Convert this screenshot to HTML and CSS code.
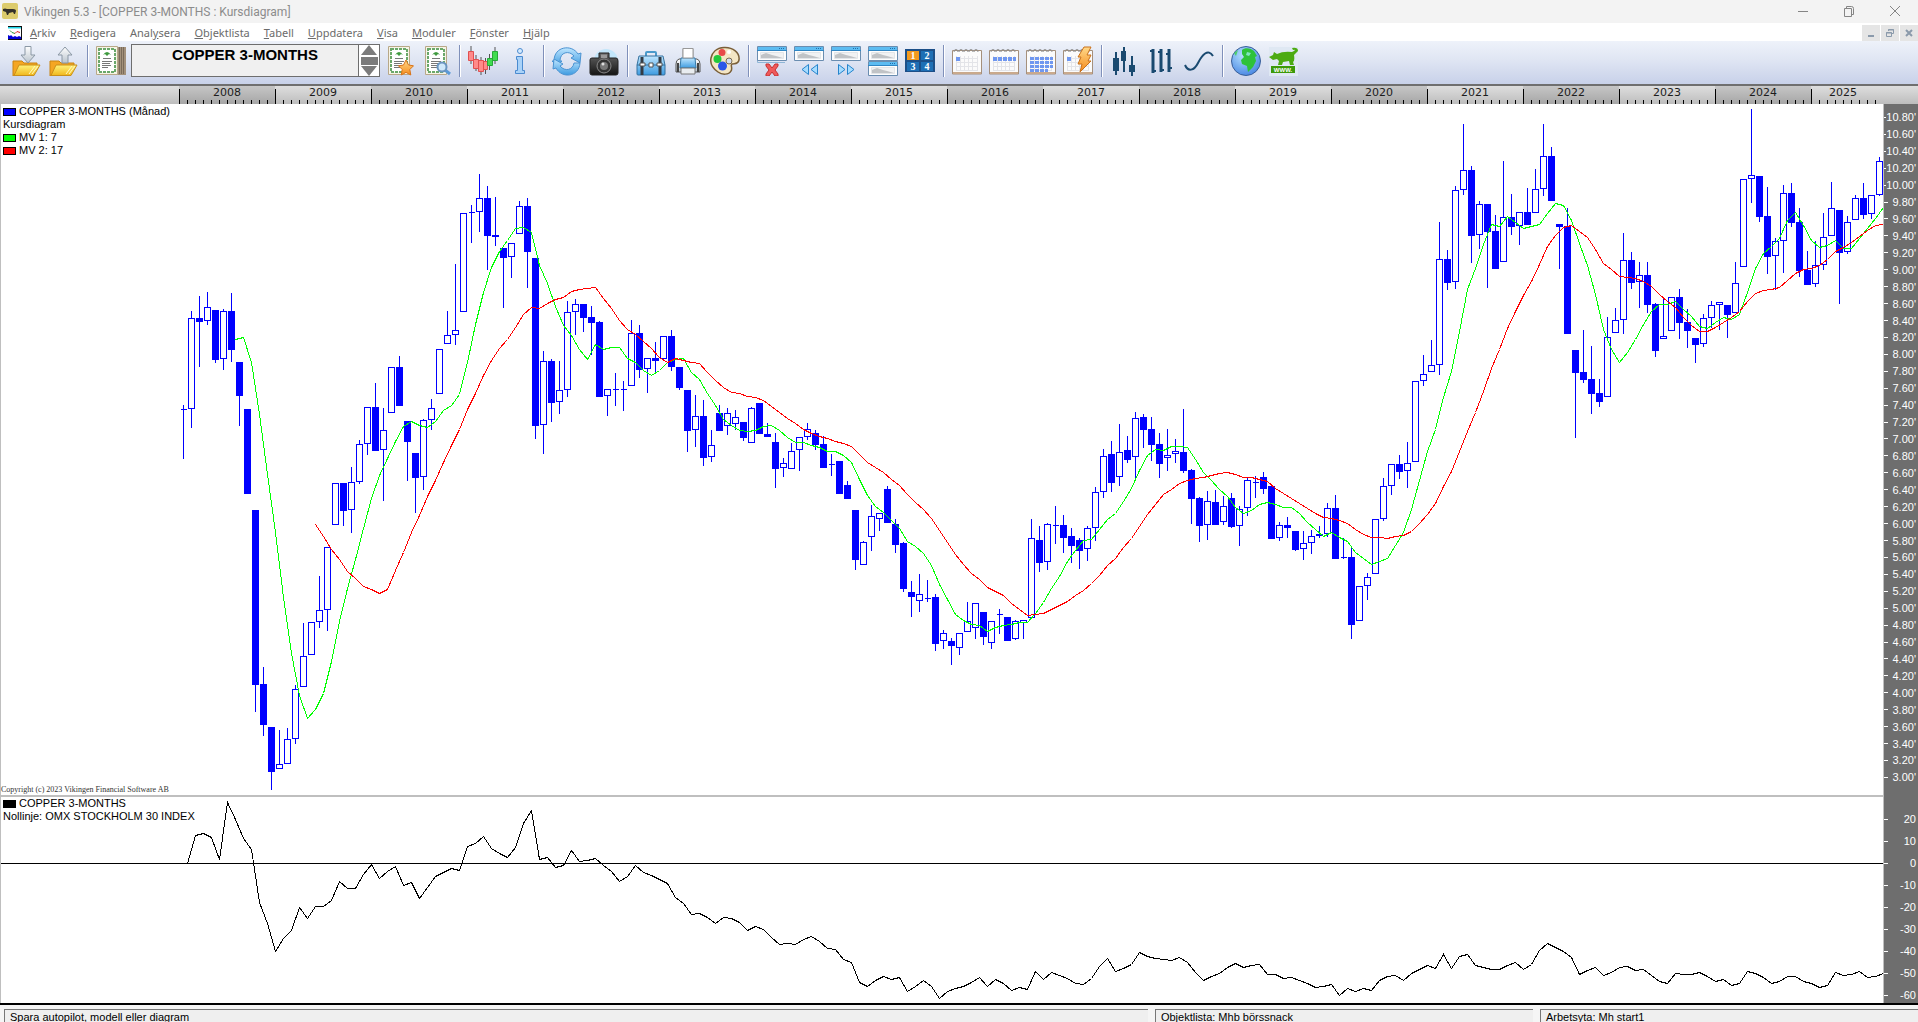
FILE: index.html
```html
<!DOCTYPE html>
<html lang="sv">
<head>
    <meta charset="UTF-8">
    <meta name="viewport" content="width=device-width, initial-scale=1.0">
    <title>Vikingen 5.3 - [COPPER 3-MONTHS : Kursdiagram]</title>
    <link rel="stylesheet" href="styles.css">
</head>
<body>
    <!-- shared gradients and shapes for the toolbar icons -->
    <svg class="defs" width="0" height="0" aria-hidden="true">
        <defs>
            <linearGradient id="gold" x1="0" y1="0" x2="0" y2="1"><stop offset="0" stop-color="#fff27a"/><stop offset="1" stop-color="#f0b71c"/></linearGradient>
            <linearGradient id="sky" x1="0" y1="0" x2="0" y2="1"><stop offset="0" stop-color="#bfe6ff"/><stop offset="1" stop-color="#3d9be0"/></linearGradient>
            <linearGradient id="steel" x1="0" y1="0" x2="0" y2="1"><stop offset="0" stop-color="#ffffff"/><stop offset="1" stop-color="#b9c3cc"/></linearGradient>
            <linearGradient id="dark" x1="0" y1="0" x2="0" y2="1"><stop offset="0" stop-color="#666"/><stop offset="1" stop-color="#141414"/></linearGradient>
            <linearGradient id="orange" x1="0" y1="0" x2="0" y2="1"><stop offset="0" stop-color="#ffd98a"/><stop offset="1" stop-color="#f58a1a"/></linearGradient>
            <radialGradient id="sea" cx="0.4" cy="0.3" r="0.8"><stop offset="0" stop-color="#b5e0ff"/><stop offset="1" stop-color="#3f7fe0"/></radialGradient>
            <g id="folder">
                <path d="M1 15h9l2 2h13v4H8l-5 9H1z" fill="#f5a623" stroke="#c98412"/>
                <path d="M7 19h21l-6 10.500H2z" fill="url(#gold)" stroke="#c98f1a"/>
                <path d="M17 28l6-8M20 28l6-8" stroke="#fff8c0" fill="none"/>
            </g>
            <g id="cert">
                <path d="M4.500.500h21v28h-21z" fill="#f6f4e6" stroke="#b8a888"/>
                <path d="M7 3h16v23H7z" fill="#fff" stroke="#6aa86a" stroke-width="2" stroke-dasharray="3 1"/>
                <path d="M11 9q4-6 8 0l-2-1-2 2-2-2z" fill="#3f9a3f"/>
                <path d="M11 12.500h8M10 15.500h10M10 17.500h8M10 19.500h9M10 21.500h6" stroke="#777" fill="none"/>
            </g>
            <g id="win">
                <path d="M.500.500h29v14h-29z" fill="#fdfdfd" stroke="#6a8db0"/>
                <path d="M1 1h28v3H1z" fill="#5cbcf2"/>
                <path d="M0 4.500h30" stroke="#2f86c4"/>
                <path d="M22 2.500h1M24 2.500h1M26 2.500h1" stroke="#1f6fae"/>
                <path d="M3.500 6.500h23v6h-23z" fill="#f1f2f3" stroke="#e2e5e8"/>
                <path d="M4 12V9l5-2 6 2 4 1 7 2z" fill="#c0c3c6"/>
            </g>
            <g id="cal">
                <path d="M.500 4.500h29v23.500h-29z" fill="#fbfbfb" stroke="#a5907c"/>
                <path d="M1 27h28" stroke="#c9a98c" stroke-width="2"/>
                <path d="M4 12.500h22M4 16.500h22M4 20.500h22M4 24.500h22M4.500 10v14M8.500 10v14M12.500 10v14M16.500 10v14M20.500 10v14M25.500 10v14" stroke="#e3e4e8" fill="none"/>
                <path d="M2 6a2 2.500 0 1 1 4 0M7 6a2 2.500 0 1 1 4 0M12 6a2 2.500 0 1 1 4 0M17 6a2 2.500 0 1 1 4 0M22 6a2 2.500 0 1 1 4 0" fill="none" stroke="#8f8f8f"/>
            </g>
        </defs>
    </svg>

    <header class="titlebar">
        <svg class="app-icon" viewBox="0 0 16 16" aria-hidden="true">
            <rect width="16" height="16" rx="2" fill="#dccb6c"/>
            <path d="M1 6q2-1 4 0h6q3 0 3 2l-1 3h-1l-1-2-4 1-1 2H5l-1-3-3-1z" fill="#33302a"/>
        </svg>
        <h1 class="title">Vikingen 5.3 - [COPPER 3-MONTHS : Kursdiagram]</h1>
        <div class="window-buttons">
            <button aria-label="Minimera"><svg viewBox="0 0 12 12"><path d="M1 6.500h10"/></svg></button>
            <button aria-label="Återställ"><svg viewBox="0 0 12 12"><path d="M1.500 3.500h7v8h-7zM3.500 3V1.500h5q2 0 2 2v6H9"/></svg></button>
            <button aria-label="Stäng"><svg viewBox="0 0 12 12"><path d="M1 1l10 10M11 1L1 11"/></svg></button>
        </div>
    </header>

    <nav class="menubar">
        <svg class="doc-icon" viewBox="0 0 14 14" aria-hidden="true">
            <path d="M0 0h14v14H0z" fill="#111"/>
            <path d="M0 1h13v12H0z" fill="#fff"/>
            <path d="M0 1h13v1.500H0z" fill="#1fd6e8"/>
            <path d="M0 13V9l2 1 1-1 2 2 2-1 2 1 2-1 2 1v2z" fill="#0000d8"/>
            <path d="M2 4.500l2 2 3 1" stroke="#2a9a3a" fill="none"/>
            <path d="M7 7.500l2-2 3 1" stroke="#d82020" fill="none"/>
        </svg>
        <a href="#"><u>A</u>rkiv</a>
        <a href="#"><u>R</u>edigera</a>
        <a href="#">Anal<u>y</u>sera</a>
        <a href="#"><u>O</u>bjektlista</a>
        <a href="#"><u>T</u>abell</a>
        <a href="#"><u>U</u>ppdatera</a>
        <a href="#"><u>V</u>isa</a>
        <a href="#"><u>M</u>oduler</a>
        <a href="#"><u>F</u>önster</a>
        <a href="#"><u>H</u>jälp</a>
        <div class="mdi-buttons">
            <button aria-label="Minimera diagram"><svg viewBox="0 0 10 10"><path d="M2 8h6" stroke-width="2"/></svg></button>
            <button aria-label="Återställ diagram"><svg viewBox="0 0 10 10"><path d="M1.500 4.500h5v4h-5zM1 5h6M3.500 3V1.500h5v4H7M3 2h6"/></svg></button>
            <button aria-label="Stäng diagram"><svg viewBox="0 0 10 10"><path d="M2 2l6 6M8 2L2 8" stroke-width="2"/></svg></button>
        </div>
    </nav>

    <div class="toolbar" role="toolbar">
        <button class="tool" aria-label="Öppna"><svg viewBox="0 0 30 30"><use href="#folder"/><path d="M13 .500h6V9h4l-7 8-7-8h4z" fill="url(#steel)" stroke="#8b98a5"/></svg></button>
        <button class="tool" aria-label="Spara"><svg viewBox="0 0 30 30"><use href="#folder"/><path d="M13 17V9H9l7-8 7 8h-4v8z" fill="url(#steel)" stroke="#8b98a5"/></svg></button>
        <span class="sep"></span>
        <button class="tool" aria-label="Objektlista"><svg viewBox="0 0 30 30"><path d="M21 1h9v28H1v-2z" fill="#a3917b"/><path d="M23.500 1v27M25.500 1v27M27.500 1v27" stroke="#7a6b5a"/><use href="#cert" x="-4"/></svg></button>

        <div class="object-field">
            <input type="text" value="COPPER 3-MONTHS" aria-label="Objekt">
            <div class="spinner">
                <button aria-label="Föregående"><svg viewBox="0 0 20 10"><path d="M10 0l8 10H2z"/></svg></button>
                <button aria-label="Lista"><svg viewBox="0 0 20 10"><path d="M2 1h17v8H2z"/></svg></button>
                <button aria-label="Nästa"><svg viewBox="0 0 20 10"><path d="M2 0h16l-8 10z"/></svg></button>
            </div>
        </div>

        <button class="tool" aria-label="Favoriter"><svg viewBox="0 0 30 30"><use href="#cert"/><path d="M22 14l2.500 5 5 .800-3.700 3.700 1 5.500-4.800-2.600-4.800 2.600 1-5.500-3.700-3.700 5-.800z" fill="url(#orange)" stroke="#d9741a"/></svg></button>
        <button class="tool" aria-label="Sök objekt"><svg viewBox="0 0 30 30"><use href="#cert"/><path d="M24 24l5 4" stroke="#5c9ad6" stroke-width="3"/><circle cx="21" cy="21" r="4.500" fill="#cfe8fb" stroke="#6a95c0" stroke-width="2"/></svg></button>
        <span class="sep"></span>
        <button class="tool" aria-label="Kursdiagram"><svg viewBox="0 0 30 30">
            <path d="M3 0v18M8 9v16M13 11v18M17.500 12v16M21.500 8v16M27 1v17" stroke="#555"/>
            <path d="M.500 5.500h5v9h-5zM5.500 13.500h5v9h-5zM10.500 14.500h5v11h-5zM15.500 15.500h4v8h-4z" fill="#ff8a8a" stroke="#e05050"/>
            <path d="M19.500 12.500h5v7h-5zM24.500 5.500h5v9h-5z" fill="#3fdc4f" stroke="#27a838"/></svg></button>
        <button class="tool" aria-label="Information"><svg viewBox="0 0 30 30"><circle cx="15" cy="5" r="2.500" fill="#d5ebff" stroke="#4b8bd0"/><path d="M11.500 10.500h6v14h2v3h-9v-3h2v-11h-1z" fill="#a9d2f8" stroke="#4b8bd0"/></svg></button>
        <span class="sep"></span>
        <button class="tool" aria-label="Uppdatera kurser"><svg viewBox="0 0 30 30"><g fill="url(#sky)" stroke="#4b93d2"><path d="M2 15C2 0 20-2 26 8l3-1-1 10-9-5 3-2c-5-6-14-4-14 5l2 0-5 5-5-5z"/><path d="M28 17C27 31 10 33 4 22l-3 1 1-10 9 5-3 2c5 6 13 4 14-3z"/></g></svg></button>
        <button class="tool" aria-label="Ögonblicksbild"><svg viewBox="0 0 30 30"><circle cx="17" cy="15" r="12" fill="#c3e6fa"/><path d="M10 12V7h10v5h7q2 0 2 3v12q0 2-2 2H3q-2 0-2-2V14q0-2 2-2z" fill="url(#dark)" stroke="#222"/><path d="M12 8.500h6V12h-6z" fill="#999"/><circle cx="15" cy="20" r="7" fill="#333" stroke="#888"/><circle cx="15" cy="20" r="4" fill="#777"/><circle cx="14" cy="18" r="1.500" fill="#ddd"/></svg></button>
        <span class="sep"></span>
        <button class="tool" aria-label="Portfölj"><svg viewBox="0 0 30 30"><path d="M10 11V7q0-1 1-1h8q1 0 1 1v4" fill="none" stroke="#4a9acb" stroke-width="2"/><path d="M3 10h24l2 9v9q0 1-1 1H2q-1 0-1-1v-9z" fill="url(#sky)" stroke="#34719e"/><path d="M1 19h28" stroke="#2e6f9f"/><path d="M6 11v18M24 11v18" stroke="#333b44" stroke-width="3"/><path d="M4 17h5v3H4zM21 17h5v3h-5zM13 17h4v4h-4z" fill="#fff" stroke="#555"/></svg></button>
        <button class="tool" aria-label="Skriv ut"><svg viewBox="0 0 30 30"><path d="M10 2.500h10V16H10z" fill="#fff" stroke="#999"/><path d="M6 13h18q3 1 3 5v8H3v-8q0-4 3-5z" fill="url(#steel)" stroke="#555"/><path d="M8 12h14l1 10H7z" fill="url(#sky)" stroke="#3478a8"/><path d="M10 2.500h10V12H10z" fill="#fff" stroke="#999"/><path d="M8 22h14v6H8z" fill="#e9edf0" stroke="#777"/><path d="M5 17v9M25 17v9" stroke="#444" stroke-width="2"/></svg></button>
        <button class="tool" aria-label="Färger"><svg viewBox="0 0 30 30"><path d="M14 1.500C23 1 30 7 29 14c-1 5-5 3-7 4s1 4-1 7c-2 4-9 4-13 1C2 22 0 17 1 12S6 2 14 1.500z" fill="#f4e6c4" stroke="#7a5f38" stroke-width="1.500"/><circle cx="12" cy="6.500" r="3.500" fill="#e84a4a"/><circle cx="7.500" cy="13" r="4" fill="#22c93a"/><circle cx="12.500" cy="20" r="4.500" fill="#2b56e8"/><circle cx="19" cy="15" r="3" fill="#d3def0" stroke="#7a6a50"/><circle cx="19" cy="6" r="2" fill="#fff"/></svg></button>
        <span class="sep"></span>
        <button class="tool" aria-label="Stäng fönster"><svg viewBox="0 0 30 30"><path d="M.500 3v13.500H28" fill="none" stroke="#8fb6d6"/><use href="#win"/><path d="M9 18h3l3 4 3-4h3v2l-3 4 3 4v2h-3l-3-4-3 4H9v-2l3-4-3-4z" fill="#ee5a5a" stroke="#c92f2f"/></svg></button>
        <button class="tool" aria-label="Föregående fönster"><svg viewBox="0 0 30 30"><use href="#win"/><path d="M14.500 18.500v10L8 23.500zM23.500 18.500v10L17 23.500z" fill="#a5dcff" stroke="#2584cc"/></svg></button>
        <button class="tool" aria-label="Nästa fönster"><svg viewBox="0 0 30 30"><use href="#win"/><path d="M7.500 18.500v10l6.500-5zM16.500 18.500v10l6.500-5z" fill="#a5dcff" stroke="#2584cc"/></svg></button>
        <button class="tool" aria-label="Dela fönster"><svg viewBox="0 0 30 30"><use href="#win"/><use href="#win" y="15"/></svg></button>
        <button class="tool" aria-label="Arbetsytor"><svg viewBox="0 0 30 30"><path d="M0 3h30v23H0z" fill="#1c4f88"/><path d="M2 5h12v9H2z" fill="#f39a1e"/><path d="M16 5h12v9H16zM2 16h12v9H2zM16 16h12v9H16z" fill="#1e6fb5"/><g class="num"><text x="8" y="13">1</text><text x="22" y="13">2</text><text x="8" y="24">3</text><text x="22" y="24">4</text></g></svg></button>
        <span class="sep"></span>
        <button class="tool" aria-label="Dag"><svg viewBox="0 0 30 30"><use href="#cal"/><path d="M4 11h4v4H4z" fill="#6f97f0"/></svg></button>
        <button class="tool" aria-label="Vecka"><svg viewBox="0 0 30 30"><use href="#cal"/><path d="M4 13h23" stroke="#6f97f0" stroke-width="4" stroke-dasharray="4 1"/></svg></button>
        <button class="tool" aria-label="Månad"><svg viewBox="0 0 30 30"><use href="#cal"/><path d="M4 12.500h23M4 16.500h23M4 20.500h23M4 24.500h18" stroke="#6f97f0" stroke-width="3" stroke-dasharray="4 1"/></svg></button>
        <button class="tool" aria-label="Intradag"><svg viewBox="0 0 30 30"><use href="#cal"/><path d="M4 11h4v4H4z" fill="#6f97f0"/><path d="M21 1h7l-4 8h4l-3 6h3L17 26l2-8h-4l3-7h-3z" fill="url(#orange)" stroke="#c9701a"/></svg></button>
        <span class="sep"></span>
        <button class="tool" aria-label="Candlestick"><svg viewBox="0 0 30 30"><path d="M6 6v23M14 1v25M22 10v20" stroke="#1a4a70" stroke-width="2"/><path d="M3 12h6v13H3zM11 5h5v10h-5zM19 19h6v7h-6z" fill="#1a4a70"/></svg></button>
        <button class="tool" aria-label="Staplar"><svg viewBox="0 0 30 30"><path d="M6 3v24M14 3v23M22 3v23" stroke="#1a4a70" stroke-width="3"/><path d="M3 5h3M6 25h3M11 6h3M14 24h3M19 8h3M22 22h3" stroke="#1a4a70" stroke-width="2"/></svg></button>
        <button class="tool" aria-label="Linje"><svg viewBox="0 0 30 30"><path d="M1 19c3 7 9 6 13-2S24 2 29 10" fill="none" stroke="#1a4a70" stroke-width="2"/></svg></button>
        <span class="sep"></span>
        <button class="tool" aria-label="Internet"><svg viewBox="0 0 30 30"><circle cx="15" cy="15" r="14.500" fill="url(#sea)" stroke="#3a5f98"/><path d="M11 4c3-3 9-2 12 1l3 5-2 1 1 4-3 6-5 5-1-6-5-2-1-4 3-3-2-3z" fill="#2ec23a"/><path d="M16 6l4 1-2 3-3-1z" fill="#7fe4c0"/><path d="M3 7l4-3-2 6z" fill="#4dcf6a"/></svg></button>
        <button class="tool" aria-label="Vikingen på webben"><svg viewBox="0 0 30 30"><path d="M1 1h29v29H1z" fill="#dfe8f3"/><path d="M1 11l4-2 1-3 3 2q6-3 15-2l2-1q2-2-1-1l-1-2q6-1 6 3l-4 4q1 6-1 7l1 3h-4l-1-4-6 1-1 3h-4l1-4-2-2-4 1z" fill="#4cab12"/><path d="M3 20h24v7H3z" fill="#3c9a08"/><text class="www" x="15" y="26">WWW.</text></svg></button>
    </div>

    <div class="ruler" id="ruler"></div>

    <main class="workspace">
        <section class="panel price">
            <div class="plot">
                <svg class="chart" id="priceChart" viewBox="0 104 1884 691" preserveAspectRatio="none" role="img" aria-label="COPPER 3-MONTHS"></svg>
                <ul class="legend">
                    <li><i class="swatch blue"></i>COPPER 3-MONTHS (Månad)</li>
                    <li>Kursdiagram</li>
                    <li><i class="swatch green"></i>MV 1: 7</li>
                    <li><i class="swatch red"></i>MV 2: 17</li>
                </ul>
                <small class="copyright">Copyright (c) 2023 Vikingen Financial Software AB</small>
            </div>
            <ul class="axis" id="priceAxis"></ul>
        </section>
        <section class="panel relative">
            <div class="plot">
                <svg class="chart" id="indexChart" viewBox="0 797 1884 206" preserveAspectRatio="none" role="img" aria-label="Relativ utveckling"></svg>
                <ul class="legend">
                    <li><i class="swatch black"></i>COPPER 3-MONTHS</li>
                    <li>Nollinje: OMX STOCKHOLM 30 INDEX</li>
                </ul>
            </div>
            <ul class="axis" id="indexAxis"></ul>
        </section>
    </main>

    <footer class="statusbar">
        <p class="status hint">Spara autopilot, modell eller diagram</p>
        <p class="status">Objektlista: Mhb börssnack</p>
        <p class="status">Arbetsyta: Mh start1</p>
    </footer>

    <script src="script.js"></script>
</body>
</html>
```

FILE: styles.css
```css
:root {
    --text: #000;
    --muted: #6b6b6b;
    --axis: #6e6e6e;
    --line: #bfbfbf;
    --candle: #0000ff;
    --font-ui: "Noto Sans", "Open Sans", sans-serif;
    --font-small: "Liberation Sans", Arial, sans-serif;
}

* {
    box-sizing: border-box;
}

body {
    margin: 0;
    height: 100vh;
    display: flex;
    flex-direction: column;
    overflow: hidden;
    background: #fff;
    color: var(--text);
    font-family: var(--font-small);
    font-size: 11px;
}

button {
    border: 0;
    padding: 0;
    background: none;
    display: flex;
    align-items: center;
    justify-content: center;
}

ul {
    list-style: none;
    margin: 0;
    padding: 0;
}

.defs {
    position: absolute;
}

/* title bar */
.titlebar {
    flex: none;
    height: 23px;
    display: flex;
    align-items: flex-start;
    background: #f3f3f3;
    padding-left: 2px;
}

.app-icon {
    width: 16px;
    height: 16px;
    margin-top: 3px;
}

.title {
    margin: 0 auto 0 6px;
    font: 12px/24px Roboto, sans-serif;
    color: #8c8c8c;
}

.window-buttons {
    display: flex;
}

.window-buttons button {
    width: 46px;
    height: 21px;
}

.window-buttons svg {
    width: 12px;
    height: 12px;
    fill: none;
    stroke: #858585;
}

/* menu */
.menubar {
    flex: none;
    height: 18px;
    display: flex;
    align-items: center;
    background: #fff;
    padding: 2px 0 0 8px;
}

.doc-icon {
    width: 14px;
    height: 14px;
    margin-right: 1px;
}

.menubar a {
    padding: 0 7px;
    font: 11px/18px var(--font-ui);
    color: var(--muted);
    text-decoration: none;
}

.mdi-buttons {
    display: flex;
    gap: 1px;
    margin-left: auto;
}

.mdi-buttons button {
    width: 18px;
    height: 17px;
    background: #e5e5e5;
}

.mdi-buttons svg {
    width: 10px;
    height: 10px;
    fill: none;
    stroke: #8b9aab;
}

/* toolbar */
.toolbar {
    flex: none;
    height: 45px;
    display: flex;
    align-items: center;
    padding: 0 8px 4px;
    background: linear-gradient(#eef2fa, #dfe5f3 45%, #c8d1e9);
    border-bottom: 2px solid #6f6f6f;
}

.tool {
    flex: none;
    width: 37px;
    height: 33px;
}

.tool svg {
    width: 30px;
    height: 30px;
}

.num text {
    font: bold 10px "Liberation Serif", serif;
    fill: #fff;
    text-anchor: middle;
}

.www {
    font: bold 6px var(--font-small);
    fill: #fff;
    text-anchor: middle;
}

.sep {
    flex: none;
    width: 2px;
    height: 32px;
    margin: 0 3px 0 5px;
    background: #7f90ba;
    border-right: 1px solid #fff;
}

.object-field {
    flex: none;
    width: 249px;
    height: 33px;
    margin: 0 0 0 2px;
    display: flex;
    border: 1px solid #6e6e6e;
    background: #f0f0f0;
}

.object-field input {
    flex: 1;
    min-width: 0;
    border: 0;
    padding: 0 0 12px;
    background: none;
    font: bold 15px var(--font-small);
    text-align: center;
}

.spinner {
    width: 21px;
    display: flex;
    flex-direction: column;
    justify-content: space-between;
    background: #fff;
    border-left: 1px solid #6e6e6e;
}

.spinner svg {
    width: 20px;
    height: 10px;
    fill: #7b7b7b;
}

/* year ruler */
.ruler {
    flex: none;
    height: 18px;
    display: flex;
    background: linear-gradient(#dedede, #bdbdbd);
}

.year {
    position: relative;
    display: flex;
    align-items: flex-end;
}

.year.even {
    background: linear-gradient(#c6c6c6, #a6a6a6);
}

.year b {
    position: absolute;
    left: 0;
    right: 0;
    top: 0;
    text-align: center;
    font: 11px/13px "DejaVu Sans", Verdana, sans-serif;
    color: #1c1c1c;
}

.month {
    flex: 1;
    height: 4px;
    border-left: 1px solid #000;
}

.month:first-of-type {
    height: 15px;
}

.year.tail .month {
    height: 4px;
}

/* chart panels */
.workspace {
    flex: 1;
    min-height: 0;
    display: flex;
    flex-direction: column;
    overflow: hidden;
    border-bottom: 2px solid #000;
}

.panel {
    display: flex;
    min-height: 0;
}

.price {
    flex: 693;
}

.relative {
    flex: 206;
    overflow: hidden;
}

.plot {
    flex: 1;
    min-width: 0;
    position: relative;
}

.price .plot {
    border-bottom: 2px solid var(--line);
}

/* frame lines lie over the charts so they do not move them */
.plot::after {
    content: "";
    position: absolute;
    inset: 0;
    border-left: 1px solid var(--line);
    border-right: 1px solid var(--line);
    pointer-events: none;
}

.chart {
    display: block;
    position: absolute;
    width: 100%;
    height: 100%;
    shape-rendering: crispEdges;
}

.chart path {
    fill: none;
    stroke-width: 1;
}

.chart .up {
    fill: #fff;
    stroke: var(--candle);
}

.chart .down {
    fill: var(--candle);
    stroke: var(--candle);
}

.chart .mv1 {
    stroke: #00ff00;
}

.chart .mv2 {
    stroke: #ff0000;
}

.chart .index,
.chart .zero {
    stroke: #000;
}

.legend {
    position: absolute;
    left: 3px;
    top: 1px;
    line-height: 13px;
}

.relative .legend {
    top: 0;
}

.legend li {
    display: flex;
    align-items: center;
    white-space: nowrap;
}

.swatch {
    width: 13px;
    height: 8px;
    margin-right: 3px;
    border: 1px solid #000;
}

.blue { background: #0000ff; }
.green { background: #00ff00; }
.red { background: #ff0000; }
.black { background: #000; }

.copyright {
    position: absolute;
    left: 1px;
    bottom: 1px;
    font: 8px/9px "Liberation Serif", serif;
    color: #333;
}

.axis {
    flex: none;
    width: 34px;
    display: flex;
    flex-direction: column;
    background: var(--axis);
    color: #fff;
}

.price .axis {
    padding: 5px 0 11px;
}

.relative .axis {
    padding-top: 11px;
    margin-bottom: -3px;
}

.axis li {
    flex: 1;
    min-height: 0;
    display: flex;
    align-items: center;
    justify-content: space-between;
    padding-right: 2px;
}

.axis li::before {
    content: "";
    width: 4px;
    height: 1px;
    background: #fff;
}

/* status bar */
.statusbar {
    flex: none;
    height: 17px;
    display: flex;
    gap: 7px;
    padding: 4px 0 0 4px;
    background: #f5f5f5;
    overflow: hidden;
}

.status {
    flex: 376;
    margin: 0;
    padding-left: 5px;
    font-size: 11px;
    line-height: 15px;
    white-space: nowrap;
    background: #efefef;
    border-top: 1px solid #777;
    border-left: 1px solid #777;
}

.status.hint {
    flex: 1150;
}
```

FILE: script.js
```js
const FIRST_X = 183.5;   // January 2008
const STEP = 8;          // one month
const LINE_SHIFT = 4;    // lines are drawn at the end of the month

// high, top of body, bottom of body, low, rising (1) or falling (0)
const candles = [
    [405,409,409,459,1],[311,318,408,428,1],[296,318,321,367,0],[292,307,320,325,1],[310,310,359,363,0],[309,311,358,370,1],
    [293,311,349,362,0],[362,362,395,426,0],[409,409,493,493,0],[510,510,684,712,0],[667,684,724,736,0],[727,727,771,790,0],
    [730,764,768,768,1],[728,739,763,763,1],[685,689,738,744,1],[623,656,686,686,1],[622,622,654,654,1],[576,610,621,628,1],
    [547,547,609,631,1],[483,483,524,524,1],[483,483,510,526,0],[467,482,509,533,1],[440,444,481,484,1],[407,407,443,455,1],
    [383,407,450,450,0],[408,430,449,501,1],[367,367,412,412,1],[356,367,405,405,0],[421,421,441,481,0],[453,453,477,513,0],
    [419,420,476,490,1],[399,408,419,430,1],[349,349,393,393,1],[311,335,343,343,1],[264,330,334,345,1],[213,213,311,311,1],
    [205,212,212,243,1],[174,198,211,232,1],[186,198,235,270,0],[197,235,236,246,0],[248,248,257,308,0],[243,243,256,278,1],
    [201,206,233,233,1],[198,206,251,288,0],[258,258,425,439,0],[351,361,424,454,1],[359,361,402,422,0],[361,390,401,414,1],
    [301,312,389,397,1],[299,304,311,335,1],[304,304,317,332,0],[306,317,322,355,0],[321,322,396,397,0],[389,389,395,416,1],
    [373,389,389,406,1],[381,389,389,411,1],[320,333,385,385,1],[325,333,369,378,0],[358,358,368,393,1],[342,358,360,372,0],
    [336,336,358,358,1],[330,336,366,371,0],[367,367,387,390,0],[390,390,430,452,0],[395,416,429,447,1],[400,416,457,466,0],
    [430,445,456,462,1],[405,413,430,431,0],[408,413,425,435,1],[410,417,423,430,1],[422,422,437,441,0],[407,408,442,442,1],
    [403,403,433,434,0],[423,434,436,437,0],[433,442,468,488,0],[458,463,467,477,1],[443,451,468,469,1],[437,437,449,471,1],
    [423,429,436,440,1],[430,433,444,450,0],[436,444,467,468,0],[454,464,464,476,1],[461,461,493,494,0],[481,485,498,499,0],
    [510,510,559,570,0],[541,542,564,564,1],[505,516,536,551,1],[513,513,518,531,1],[486,489,522,523,0],[519,524,544,553,0],
    [542,543,588,592,0],[581,592,596,617,0],[574,594,600,612,1],[580,598,598,602,1],[594,597,643,651,0],[630,633,640,649,1],
    [638,641,645,665,0],[633,633,647,655,1],[602,621,631,631,1],[603,603,627,639,1],[612,612,636,645,0],[621,621,642,649,1],
    [609,614,614,634,1],[617,617,640,641,0],[620,621,638,640,1],[620,620,622,639,1],[519,538,617,617,1],[526,540,562,572,0],
    [523,524,561,570,1],[506,525,525,544,1],[515,525,537,553,0],[528,536,545,563,0],[538,540,550,569,0],[526,528,548,561,1],
    [487,492,527,541,1],[449,456,491,498,1],[441,454,482,492,0],[424,452,476,486,1],[436,450,459,463,0],[412,418,456,479,1],
    [414,417,429,448,0],[417,429,444,461,0],[433,444,463,478,0],[429,455,457,471,1],[439,451,453,463,1],[409,452,470,473,0],
    [469,470,498,524,0],[497,498,525,542,0],[491,501,524,540,1],[490,502,524,525,0],[496,506,521,525,1],[493,498,526,528,0],
    [506,509,525,546,1],[477,480,507,516,1],[476,482,482,498,1],[472,477,488,494,0],[486,486,538,539,0],[522,525,537,541,1],
    [517,525,527,538,0],[531,531,549,551,0],[531,543,548,560,1],[530,536,542,554,1],[526,534,535,538,0],[503,508,533,537,1],
    [495,508,558,559,0],[538,557,557,559,1],[546,557,624,639,0],[586,586,620,620,1],[573,577,585,600,1],[519,519,573,573,1],
    [478,486,518,521,1],[464,464,485,495,1],[455,464,471,479,0],[442,463,470,488,1],[381,381,461,461,1],[355,374,380,386,1],
    [340,365,371,371,1],[222,259,364,375,1],[250,259,282,290,0],[186,190,281,289,1],[124,170,189,195,1],[166,170,235,263,0],
    [201,204,234,249,1],[204,204,231,288,0],[215,231,268,269,0],[161,217,261,262,1],[194,217,226,235,0],[212,212,225,245,1],
    [188,212,224,225,0],[169,189,212,212,1],[124,156,188,196,1],[147,156,200,201,0],[224,224,226,269,0],[208,226,333,334,0],
    [350,350,372,438,0],[330,372,379,383,0],[346,379,393,414,0],[379,393,401,407,0],[317,337,396,397,1],[308,320,332,332,1],
    [233,260,319,334,1],[252,260,282,289,0],[262,275,281,308,1],[262,275,304,313,0],[303,304,350,357,0],[297,336,338,339,1],
    [297,297,330,330,1],[289,297,322,339,0],[309,322,330,348,0],[338,338,344,363,0],[314,318,343,347,1],[301,305,317,328,1],
    [302,302,304,330,1],[305,305,314,338,0],[262,283,312,312,1],[179,179,266,267,1],[109,175,178,203,1],[176,176,216,222,0],
    [187,216,256,274,0],[238,241,255,290,1],[185,193,240,273,1],[183,193,222,227,0],[208,222,270,277,0],[251,270,284,285,0],
    [241,265,283,287,1],[213,237,264,270,1],[182,208,235,236,1],[210,210,252,304,0],[216,222,251,254,1],[195,198,219,220,1],
    [183,198,214,219,0],[195,195,213,219,1],[157,161,194,196,1]
];

// relative performance against the zero line
const relative = [
    863,835,833,837,859,802,819,838,849,902,923,951,938,930,907,918,906,906,900,881,888,888,874,864,
    878,871,866,885,882,898,887,876,872,868,870,846,843,836,848,853,857,847,823,810,859,857,867,865,
    850,861,860,858,865,871,881,876,865,872,875,879,883,897,903,914,913,917,923,917,918,922,930,926,
    929,937,944,943,944,939,936,941,948,949,959,962,982,986,980,976,979,977,991,986,980,986,998,991,
    988,986,982,977,986,979,983,990,987,989,971,979,972,975,978,983,984,978,966,958,971,968,964,952,
    956,958,959,960,957,962,972,980,976,973,967,963,967,965,964,974,974,978,977,980,983,987,986,984,
    995,988,991,988,990,980,976,975,980,973,969,965,968,954,968,956,954,965,967,969,969,965,962,969,
    964,950,943,947,951,957,974,970,967,975,972,967,966,970,969,975,981,983,973,974,974,972,976,981,
    979,985,983,971,973,977,983,981,976,976,981,983,987,985,972,975,974,971,977,976,973
];

function path(cls, d) {
    return `<path class="${cls}" d="${d}"/>`;
}

function drawCandles() {
    return candles.map(([high, top, bottom, low, rising], i) => {
        const x = FIRST_X + i * STEP;
        const body = `M${x - 3} ${top + 0.5}h6V${bottom + 0.5}h-6z`;
        const wicks = `M${x} ${high}V${top}M${x} ${bottom}V${low}`;
        return path(rising ? 'up' : 'down', wicks + body);
    }).join('');
}

function movingAverage(length) {
    const close = candles.map(c => c[4] ? c[1] : c[2]);
    const points = [];
    for (let i = length - 1; i < close.length; i++) {
        const sum = close.slice(i - length + 1, i + 1).reduce((a, b) => a + b, 0);
        points.push(`${FIRST_X + i * STEP + LINE_SHIFT} ${Math.round(sum / length) + 0.5}`);
    }
    return 'M' + points.join('L');
}

function drawRuler() {
    let html = '<div class="year" style="flex: 179"></div>';
    for (let year = 2008; year <= 2025; year++) {
        const months = year === 2025 ? 8 : 12;
        html += `<div class="year ${year % 2 ? '' : 'even'}" style="flex: ${months * STEP}"><b>${year}</b>`;
        html += '<span class="month"></span>'.repeat(months) + '</div>';
    }
    html += '<div class="year tail" style="flex: 43"><span class="month"></span></div>';
    document.getElementById('ruler').innerHTML = html;
}

function drawAxis(id, labels) {
    document.getElementById(id).innerHTML = labels.map(l => `<li>${l}</li>`).join('');
}

drawRuler();

document.getElementById('priceChart').innerHTML =
    drawCandles() + path('mv1', movingAverage(7)) + path('mv2', movingAverage(17));

document.getElementById('indexChart').innerHTML =
    path('zero', 'M0 863.5H1884') +
    path('index', 'M' + relative.map((y, i) => `${FIRST_X + i * STEP + LINE_SHIFT} ${y + 0.5}`).join('L'));

drawAxis('priceAxis', Array.from({ length: 40 }, (_, i) => (10.8 - i * 0.2).toFixed(2) + "'"));
drawAxis('indexAxis', [20, 10, 0, -10, -20, -30, -40, -50, -60]);
```
